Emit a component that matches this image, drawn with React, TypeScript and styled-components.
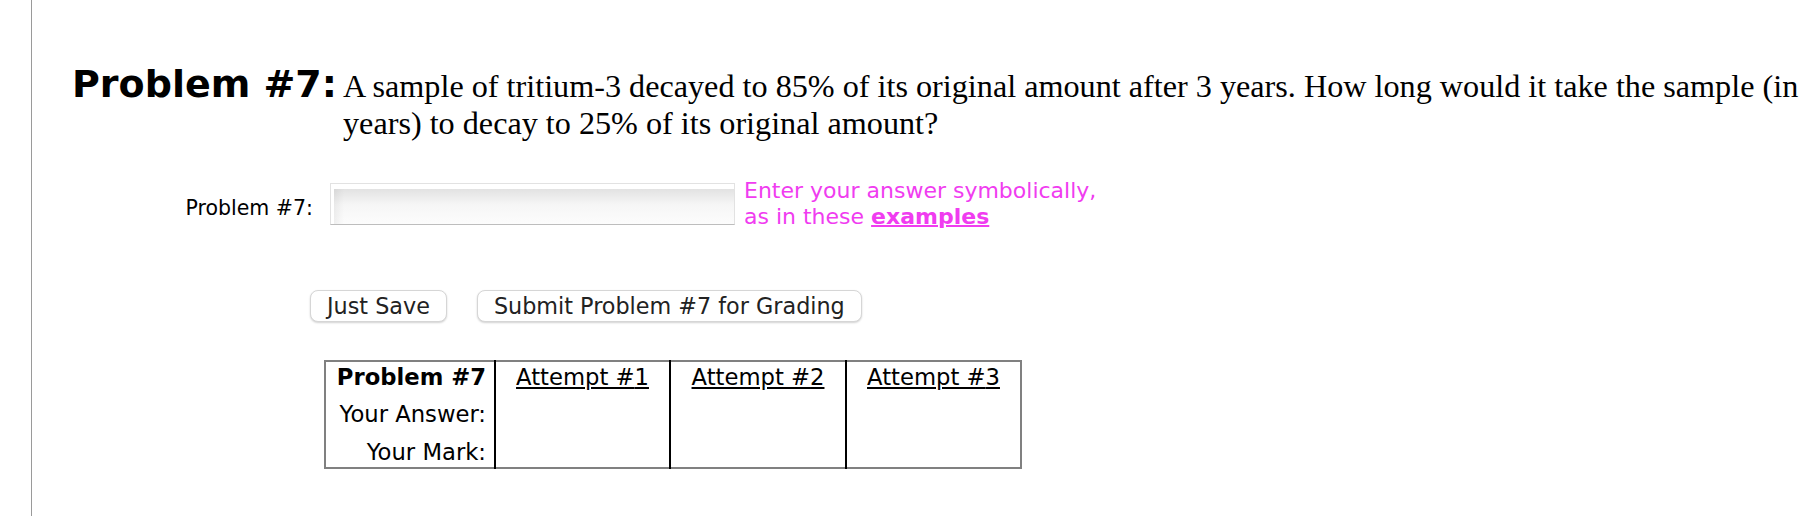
import styled, { createGlobalStyle } from 'styled-components'

const GlobalStyle = createGlobalStyle`
  html, body {
    margin: 0;
    padding: 0;
    background: #fff;
  }
  body {
    font-family: Verdana, "DejaVu Sans", sans-serif;
    color: #000;
  }
`

const attempts = [1, 2, 3]

export default function App() {
  return (
    <>
      <GlobalStyle />
      <Page>
        <Frame>
          <QuestionRow>
            <ProblemTitle>Problem #7:</ProblemTitle>
            <QuestionText>
              A sample of tritium-3 decayed to 85% of its original amount after 3 years. How long
              would it take the sample (in years) to decay to 25% of its original amount?
            </QuestionText>
          </QuestionRow>

          <AnswerRow>
            <AnswerLabel>Problem #7:</AnswerLabel>
            <AnswerInput type="text" />
            <Hint>
              Enter your answer symbolically,
              <br />
              as in these <a href="#">examples</a>
            </Hint>
          </AnswerRow>

          <ButtonRow>
            <Button>Just Save</Button>
            <Button>Submit Problem #7 for Grading</Button>
          </ButtonRow>

          <Attempts>
            <colgroup>
              <col style={{ width: 170 }} />
              <col style={{ width: 175 }} />
              <col style={{ width: 176 }} />
              <col style={{ width: 175 }} />
            </colgroup>
            <tbody>
              <TableRow $top={2} $bottom={4}>
                <HeadCell>Problem #7</HeadCell>
                {attempts.map((n) => (
                  <AttemptCell key={n}>
                    <AttemptLink href="#">Attempt #{n}</AttemptLink>
                  </AttemptCell>
                ))}
              </TableRow>
              <TableRow $top={6} $bottom={3}>
                <RowLabel>Your Answer:</RowLabel>
                {attempts.map((n) => (
                  <AttemptCell key={n} />
                ))}
              </TableRow>
              <TableRow $top={8} $bottom={1}>
                <RowLabel>Your Mark:</RowLabel>
                {attempts.map((n) => (
                  <AttemptCell key={n} />
                ))}
              </TableRow>
            </tbody>
          </Attempts>
        </Frame>
      </Page>
    </>
  )
}

const Page = styled.div`
  width: 1818px;
  height: 516px;
  overflow: hidden;
  box-sizing: border-box;
  padding-left: 31px;
`
const Frame = styled.div`
  height: 100%;
  box-sizing: border-box;
  border-left: 1px solid #9a9a9a;
  padding: 62px 6px 0 40px;
`
const QuestionRow = styled.div`
  display: flex;
  align-items: baseline;
`
const ProblemTitle = styled.h2`
  margin: 0 6px 0 0;
  flex: none;
  font-family: Verdana, "DejaVu Sans", sans-serif;
  font-weight: bold;
  font-size: 38px;
  white-space: nowrap;
`
const QuestionText = styled.div`
  flex: 1;
  font-family: "Times New Roman", "Liberation Serif", serif;
  font-size: 32.2px;
  line-height: normal;
`
const AnswerRow = styled.div`
  display: flex;
  align-items: center;
  margin-top: 36px;
  margin-left: -40px;
`
const AnswerLabel = styled.label`
  width: 281px;
  text-align: right;
  font-size: 20.5px;
  padding-top: 9px;
  margin-right: 17px;
`
const AnswerInput = styled.input`
  width: 405px;
  height: 42px;
  box-sizing: border-box;
  margin: 0 9px 0 0;
  padding: 5px 0 0 3px;
  border: 1px solid #e2e2e2;
  border-bottom-color: #bdbdbd;
  border-radius: 0;
  background:
    linear-gradient(to right, rgba(0, 0, 0, 0.05), rgba(0, 0, 0, 0) 10px),
    linear-gradient(to bottom, #e2e2e2, #f6f6f6 45%, #fcfcfc);
  background-origin: content-box;
  background-clip: content-box;
  outline: none;
  font-size: 20px;
`
const Hint = styled.div`
  color: #f03cf0;
  font-size: 22px;
  line-height: 25.5px;
  a {
    color: #f03cf0;
    font-weight: bold;
    text-decoration: underline;
    text-decoration-thickness: 2px;
  }
`
const ButtonRow = styled.div`
  display: flex;
  gap: 30px;
  margin-top: 61px;
  margin-left: 238px;
`
const Button = styled.button`
  font-family: Verdana, "DejaVu Sans", sans-serif;
  font-size: 22.3px;
  line-height: 24px;
  color: #222;
  background: #fff;
  border: 1px solid #d6d6d6;
  border-radius: 8px;
  padding: 3px 16px;
  box-shadow: 0 1px 2px rgba(0, 0, 0, 0.18);
`
const Attempts = styled.table`
  margin-top: 38px;
  margin-left: 252px;
  width: 696px;
  table-layout: fixed;
  border-collapse: collapse;
  border: 2px solid #808080;
  font-size: 22.7px;
`
const TableRow = styled.tr<{ $top: number; $bottom: number }>`
  td {
    padding-top: ${(p) => p.$top}px;
    padding-bottom: ${(p) => p.$bottom}px;
  }
`
const Cell = styled.td`
  padding-left: 8px;
  padding-right: 8px;
  line-height: 27px;
  white-space: nowrap;
`
const HeadCell = styled(Cell)`
  text-align: right;
  font-weight: bold;
`
const RowLabel = styled(Cell)`
  text-align: right;
`
const AttemptCell = styled(Cell)`
  text-align: center;
  border-left: 2px solid #000;
`
const AttemptLink = styled.a`
  color: #000;
  text-decoration: underline;
`
